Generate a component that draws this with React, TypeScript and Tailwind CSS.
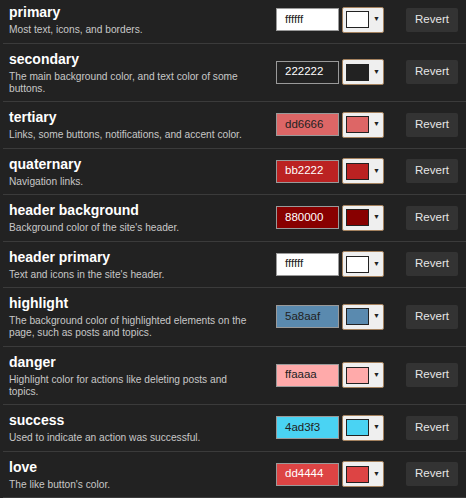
const colors = [
  { name: 'primary', description: 'Most text, icons, and borders.', value: 'ffffff', dark: false },
  {
    name: 'secondary',
    description: 'The main background color, and text color of some buttons.',
    value: '222222',
    dark: true,
  },
  {
    name: 'tertiary',
    description: 'Links, some buttons, notifications, and accent color.',
    value: 'dd6666',
    dark: false,
  },
  { name: 'quaternary', description: 'Navigation links.', value: 'bb2222', dark: true },
  { name: 'header background', description: "Background color of the site's header.", value: '880000', dark: true },
  { name: 'header primary', description: "Text and icons in the site's header.", value: 'ffffff', dark: false },
  {
    name: 'highlight',
    description: 'The background color of highlighted elements on the page, such as posts and topics.',
    value: '5a8aaf',
    dark: false,
  },
  {
    name: 'danger',
    description: 'Highlight color for actions like deleting posts and topics.',
    value: 'ffaaaa',
    dark: false,
  },
  { name: 'success', description: 'Used to indicate an action was successful.', value: '4ad3f3', dark: false },
  { name: 'love', description: "The like button's color.", value: 'dd4444', dark: true },
];

const ColorRow = ({ name, description, value, dark }: (typeof colors)[number]) => (
  <div className="flex items-center border-b border-[#3b3b3b] pl-[6px] pr-[8px] pt-[6px] pb-[6.5px]">
    <div className="w-[249px]">
      <h3 className="text-[14px] leading-[18px] font-bold text-white">{name}</h3>
      <p className="mt-[3px] text-[10.2px] leading-[12px] text-[#c8c8c8]">{description}</p>
    </div>
    <div className="ml-auto flex items-center">
      <div
        className={`w-[63px] h-[23px] border border-[#9a9a9a] pl-[8px] flex items-center text-[11.5px] ${
          dark ? 'text-white' : 'text-[#222]'
        }`}
        style={{ backgroundColor: `#${value}` }}
      >
        {value}
      </div>
      <div className="ml-[3px] w-[42px] h-[26px] bg-[#efefef] border border-[#a4825f] rounded-[2px] flex items-center pl-[3px]">
        <div className="w-[23px] h-[17px] border border-[#222]" style={{ backgroundColor: `#${value}` }} />
        <span className="ml-[4px] text-[7px] text-[#222]">▼</span>
      </div>
      <button className="ml-[22px] w-[52px] h-[24px] bg-[#333] rounded-[2px] text-[11.5px] text-[#e6e6e6]">
        Revert
      </button>
    </div>
  </div>
);

const App = () => {
  return (
    <div
      className="min-h-screen bg-[#222] pl-[3px] -mt-[3px]"
      style={{ fontFamily: '"Liberation Sans", Arial, sans-serif' }}
    >
      {colors.map((c) => (
        <ColorRow key={c.name} {...c} />
      ))}
    </div>
  );
};

export default App;
